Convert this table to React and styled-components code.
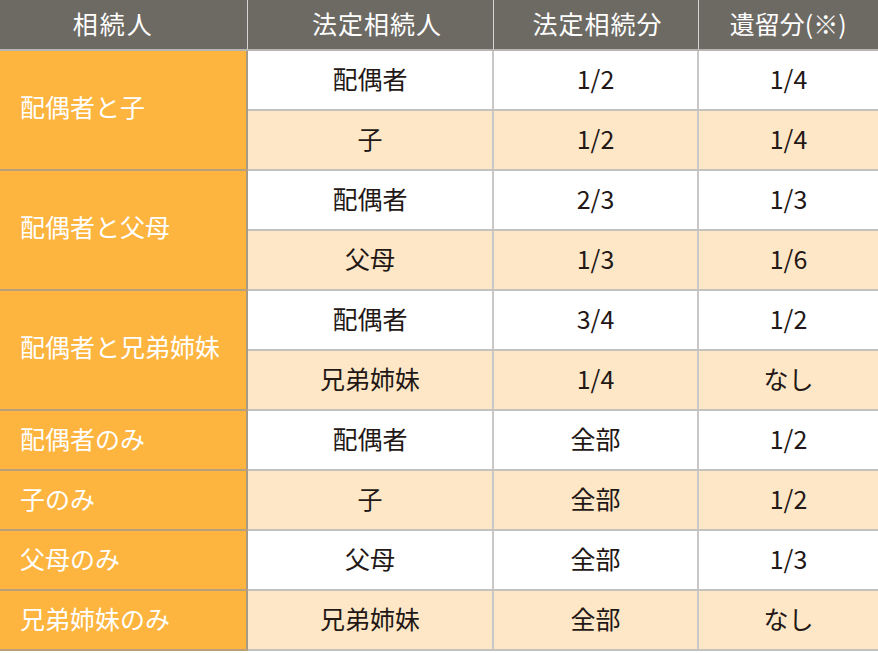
import React from "react";
import styled, { createGlobalStyle } from "styled-components";

const GlobalStyle = createGlobalStyle`
  html, body {
    margin: 0;
    padding: 0;
    background: #ffffff;
  }
  body {
    font-family: "Noto Sans CJK JP", "Noto Sans", sans-serif;
  }
`;

const rows = [
  { group: "配偶者と子", span: 2, heir: "配偶者", share: "1/2", reserve: "1/4" },
  { heir: "子", share: "1/2", reserve: "1/4" },
  { group: "配偶者と父母", span: 2, heir: "配偶者", share: "2/3", reserve: "1/3" },
  { heir: "父母", share: "1/3", reserve: "1/6" },
  { group: "配偶者と兄弟姉妹", span: 2, heir: "配偶者", share: "3/4", reserve: "1/2" },
  { heir: "兄弟姉妹", share: "1/4", reserve: "なし" },
  { group: "配偶者のみ", span: 1, heir: "配偶者", share: "全部", reserve: "1/2" },
  { group: "子のみ", span: 1, heir: "子", share: "全部", reserve: "1/2" },
  { group: "父母のみ", span: 1, heir: "父母", share: "全部", reserve: "1/3" },
  { group: "兄弟姉妹のみ", span: 1, heir: "兄弟姉妹", share: "全部", reserve: "なし" },
];

export default function App() {
  return (
    <>
      <GlobalStyle />
      <Table>
        <colgroup>
          <col style={{ width: 247 }} />
          <col style={{ width: 246 }} />
          <col style={{ width: 205 }} />
          <col />
        </colgroup>
        <thead>
          <tr>
            <Th $shift={-10} $spacing={2}>相続人</Th>
            <Th $shift={7} $spacing={1}>法定相続人</Th>
            <Th $shift={2} $spacing={1}>法定相続分</Th>
            <Th>遺留分(※)</Th>
          </tr>
        </thead>
        <tbody>
          {rows.map((r, i) => (
            <tr key={i}>
              {r.group && (
                <GroupCell rowSpan={r.span} $tall={r.span > 1}>
                  {r.group}
                </GroupCell>
              )}
              <Td $shaded={i % 2 === 1}>{r.heir}</Td>
              <Td $shaded={i % 2 === 1}>{r.share}</Td>
              <Td $shaded={i % 2 === 1}>{r.reserve}</Td>
            </tr>
          ))}
        </tbody>
      </Table>
    </>
  );
}

const Table = styled.table`
  width: 878px;
  table-layout: fixed;
  border-collapse: collapse;
  font-size: 25px;
  line-height: 1;
  color: #231815;
`;

const Th = styled.th`
  height: 47px;
  padding: 0 ${(p) => Math.max(0, -2 * (p.$shift || 0))}px 2px
    ${(p) => Math.max(0, 2 * (p.$shift || 0))}px;
  background-color: #6d6a64;
  color: #ffffff;
  font-weight: 400;
  letter-spacing: ${(p) => p.$spacing || 0}px;
  text-align: center;
  border-left: 1px solid #d6d6d4;
  border-bottom: 2px solid #b8b6b2;
  &:first-child {
    border-left: none;
  }
`;

const GroupCell = styled.td`
  padding: 0 0 ${(p) => (p.$tall ? "8px" : "3px")} 20px;
  background-color: #fdb53f;
  color: #ffffff;
  text-align: left;
  border-bottom: 2px solid #b8a17a;
  border-right: 2px solid #a79a83;
`;

const Td = styled.td`
  height: 55px;
  padding: 0 0 3px;
  text-align: center;
  background-color: ${(p) => (p.$shaded ? "#fee7c7" : "#ffffff")};
  border-bottom: 2px solid #c4c2be;
  border-left: 2px solid #c8c8c8;
  &:nth-last-child(3) {
    border-left: none;
  }
`;
